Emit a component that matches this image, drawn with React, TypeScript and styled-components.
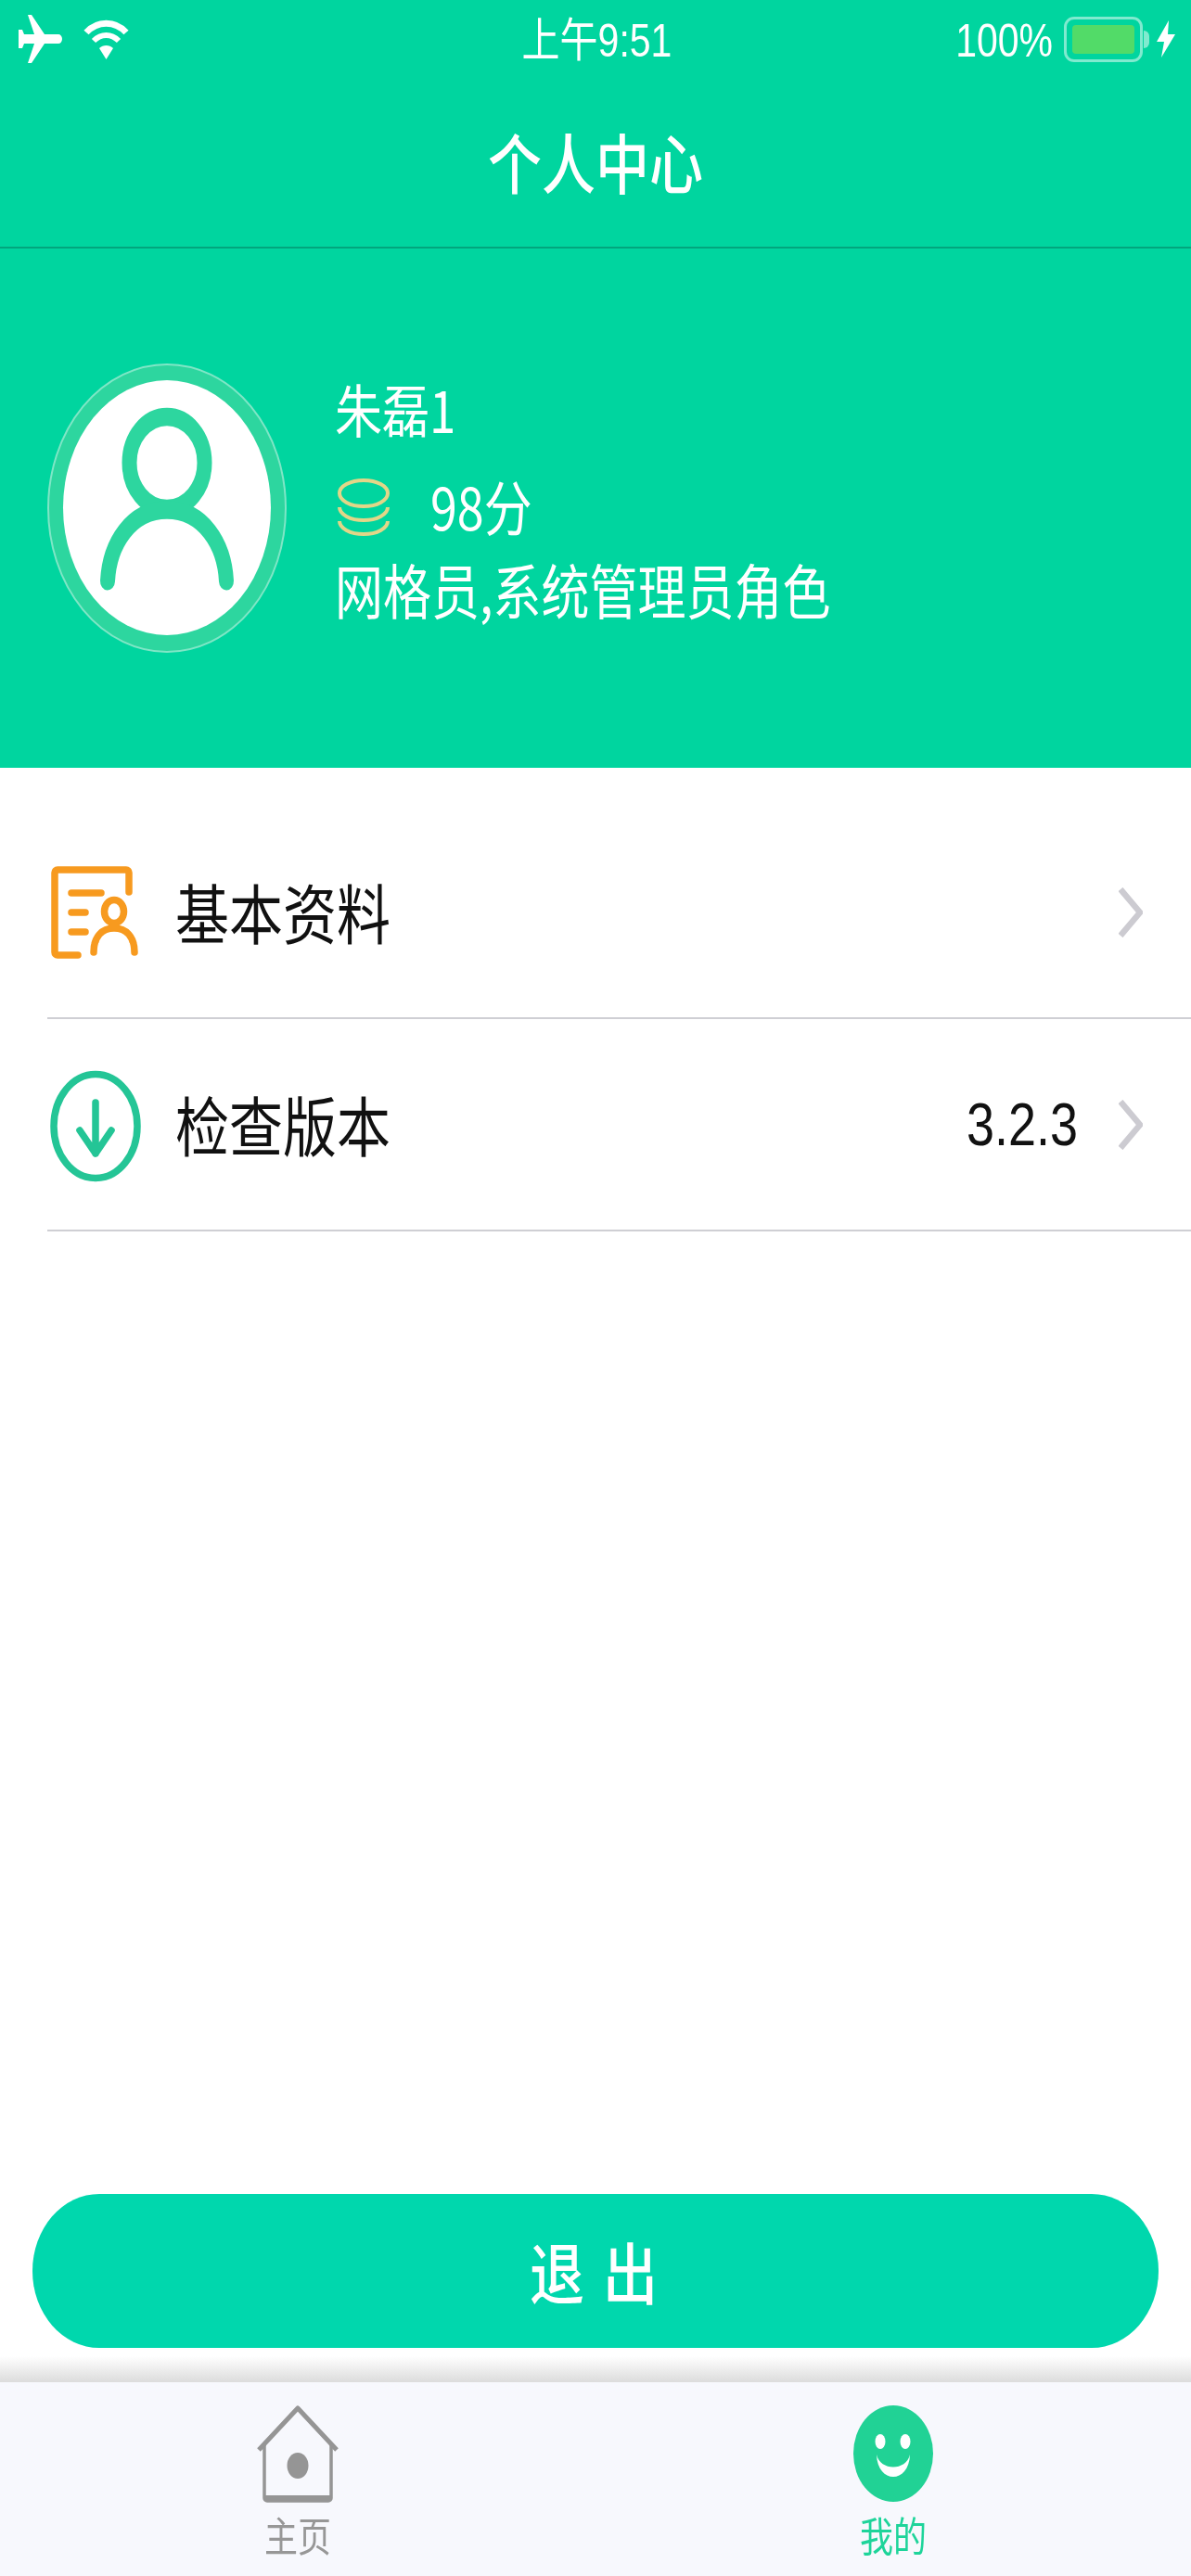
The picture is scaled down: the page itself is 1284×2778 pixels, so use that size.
import React from "react";
import styled, { createGlobalStyle } from "styled-components";

const Global = createGlobalStyle`
  html, body { margin: 0; padding: 0; background: #fff; }
  #root { width: 1284px; }
  * { box-sizing: border-box; }
`;

const CJK = `"Noto Sans CJK SC", "Liberation Sans", sans-serif`;
const LATIN = `"Liberation Sans", "Noto Sans CJK SC", sans-serif`;

const Page = styled.div`
  width: 1284px;
  height: 2778px;
  display: flex;
  flex-direction: column;
  background: #fff;
  overflow: hidden;
  font-family: ${CJK};
  filter: blur(0.6px);
`;

const Tall = styled.span<{ $size: number; $color?: string; $weight?: number; $spacing?: number; $latin?: boolean }>`
  display: inline-block;
  font-family: ${(p) => (p.$latin ? LATIN : CJK)};
  font-size: ${(p) => p.$size}px;
  font-weight: ${(p) => p.$weight ?? 400};
  line-height: 1.2;
  letter-spacing: ${(p) => p.$spacing ?? 0}px;
  color: ${(p) => p.$color ?? "#fff"};
  white-space: nowrap;
  transform: scaleY(1.216);
`;

const StatusText = styled(Tall)`
  margin-top: 6px;
`;

const Header = styled.header`
  background: #00d59f;
  flex: none;
`;

const StatusBar = styled.div`
  height: 84px;
  display: grid;
  grid-template-columns: 1fr auto 1fr;
  align-items: center;
  padding: 0 17px 0 20px;
`;

const StatusLeft = styled.div`
  display: flex;
  align-items: center;
  gap: 23px;
`;

const StatusRight = styled.div`
  display: flex;
  align-items: center;
  justify-content: flex-end;
  gap: 12px;
`;

const Battery = styled.div`
  width: 85px;
  height: 49px;
  padding: 6px;
  border: 3px solid rgba(255, 255, 255, 0.5);
  border-radius: 11px;
  position: relative;
  &::after {
    content: "";
    position: absolute;
    right: -10px;
    top: 12px;
    width: 6px;
    height: 19px;
    background: rgba(255, 255, 255, 0.5);
    border-radius: 0 6px 6px 0;
  }
`;

const BatteryFill = styled.div`
  width: 100%;
  height: 100%;
  background: #52db68;
  border-radius: 4px;
`;

const BoltIcon = styled.svg`
  width: 20px;
  height: 40px;
  margin-left: 3px;
  flex: none;
`;

const NavBar = styled.div`
  height: 184px;
  display: flex;
  align-items: center;
  justify-content: center;
  border-bottom: 2px solid #02a57d;
`;

const Profile = styled.section`
  height: 560px;
  display: flex;
  align-items: center;
  gap: 52px;
  padding-left: 51px;
`;

const AvatarSvg = styled.svg`
  width: 258px;
  height: 312px;
  flex: none;
`;

const ProfileInfo = styled.div`
  display: flex;
  flex-direction: column;
  padding-bottom: 20px;
`;

const InfoLine = styled.div<{ $gap?: number }>`
  height: 62px;
  display: flex;
  align-items: center;
  margin-bottom: ${(p) => p.$gap ?? 0}px;
`;

const ScoreLine = styled(InfoLine)`
  gap: 44px;
  padding-left: 3px;
`;

const CoinIcon = styled.svg`
  width: 56px;
  height: 62px;
  flex: none;
  margin-top: 4px;
`;

const List = styled.div`
  padding: 42px 0 0 51px;
  flex: none;
`;

const Row = styled.div`
  height: 229px;
  display: flex;
  align-items: center;
  padding-right: 52px;
  border-bottom: 2px solid #cfcfd4;
`;

const RowIcon = styled.svg`
  width: 102px;
  flex: none;
  margin-right: 36px;
`;

const RowTitle = styled.div`
  flex: 1;
`;

const RowValue = styled.div`
  margin-right: 44px;
`;

const Chevron = styled.svg`
  width: 26px;
  height: 54px;
  flex: none;
`;

const Spacer = styled.div`
  flex: 1;
`;

const LogoutButton = styled.button`
  flex: none;
  height: 166px;
  margin: 0 35px 37px;
  border: 0;
  border-radius: 72px / 83px;
  background: #00d7ad;
  display: flex;
  align-items: center;
  justify-content: center;
  padding: 0 0 0 16px;
`;

const TabBar = styled.nav`
  flex: none;
  height: 209px;
  background: #f7f8fd;
  display: grid;
  grid-template-columns: 1fr 1fr;
  position: relative;
  &::before {
    content: "";
    position: absolute;
    left: 0;
    right: 0;
    top: -28px;
    height: 28px;
    background: linear-gradient(to bottom, rgba(255, 255, 255, 0), #dcdcdc);
  }
`;

const Tab = styled.div`
  display: flex;
  flex-direction: column;
  align-items: center;
  padding-top: 25px;
`;

const TabIcon = styled.svg`
  width: 88px;
  height: 105px;
  flex: none;
`;

const TabLabel = styled.div`
  margin-top: 13px;
`;

const Plane = () => (
  <svg width="47" height="52" viewBox="0 0 47 52">
    <path fill="#fff" d="M10 0h4l14 21h15c2 0 4 2 4 5s-2 5-4 5H28L14 52h-4l7-21H6l-2 5H0V16h4l2 5h11z" />
  </svg>
);

const Wifi = () => (
  <svg width="49" height="43" viewBox="0 0 49 43">
    <path fill="none" stroke="#fff" strokeWidth="7" d="M3 14C15 1 34 1 46 14" />
    <path fill="none" stroke="#fff" strokeWidth="6" d="M11 23c8-8 19-8 27 0" />
    <path fill="#fff" d="M17 31c4-4 11-4 15 0l-7.500 12z" />
  </svg>
);

const Bolt = () => (
  <BoltIcon viewBox="0 0 20 40">
    <path fill="#fff" d="M13 0 0 23h8L5 40l15-25h-8z" />
  </BoltIcon>
);

const Avatar = () => (
  <AvatarSvg viewBox="0 0 258 312">
    <ellipse cx="129" cy="156" rx="128" ry="155" fill="#2dd69f" stroke="#7fe6c6" strokeWidth="2" />
    <ellipse cx="129" cy="155.500" rx="112" ry="137.500" fill="#fff" />
    <g transform="scale(1 1.216)" fill="none" stroke="#2dd69f" strokeWidth="16">
      <ellipse cx="129" cy="88" rx="40.500" ry="40.700" />
      <path d="M65 193C67 160 90 130 129 130C168 130 191 160 193 193" strokeLinecap="round" />
    </g>
  </AvatarSvg>
);

const Coins = () => (
  <CoinIcon viewBox="0 0 56 62">
    <g fill="none" stroke="#e2d688" strokeWidth="4">
      <path d="M2 31a26 14 0 0 0 52 0" />
      <path d="M2 46a26 14 0 0 0 52 0" />
      <ellipse cx="28" cy="16" rx="26" ry="14" />
    </g>
  </CoinIcon>
);

const ProfileDocIcon = () => (
  <RowIcon height={102} viewBox="0 -1 102 102">
    <g fill="none" stroke="#f79a1f" strokeWidth="7.500" strokeLinecap="round" strokeLinejoin="round">
      <path d="M33 96H11a3 3 0 0 1-3-3V7a3 3 0 0 1 3-3h74a3 3 0 0 1 3 3v21" />
      <path d="M26 29h32M26 50h15M26 71h15" />
      <ellipse cx="72" cy="49" rx="10.500" ry="12.500" />
      <path d="M50 93c0-17 9-26 22-26s22 9 22 26" />
    </g>
  </RowIcon>
);

const DownloadIcon = () => (
  <RowIcon height={124} viewBox="0 0 102 124">
    <ellipse cx="52" cy="63.500" rx="45" ry="56" fill="none" stroke="#24c596" strokeWidth="7.500" />
    <path d="M52 38v55M35 68l17 25 17-25" fill="none" stroke="#24c596" strokeWidth="7.500" strokeLinecap="round" strokeLinejoin="round" />
  </RowIcon>
);

const Arrow = () => (
  <Chevron viewBox="0 0 26 54">
    <path d="M2 2l21 25L2 52" fill="none" stroke="#cccbd1" strokeWidth="6.500" />
  </Chevron>
);

const House = () => (
  <TabIcon viewBox="0 0 88 105">
    <path d="M2 48 44 3l42 45" fill="none" stroke="#959595" strokeWidth="5" strokeLinejoin="round" />
    <path d="M8 40v60a3 3 0 0 0 3 3h66a3 3 0 0 0 3-3V40" fill="none" stroke="#959595" strokeWidth="3.500" />
    <path d="M9 99.500h70" stroke="#959595" strokeWidth="5" />
    <ellipse cx="44" cy="65" rx="11.500" ry="14" fill="#959595" />
  </TabIcon>
);

const Smile = () => (
  <TabIcon viewBox="0 0 88 105">
    <ellipse cx="44" cy="52" rx="43" ry="52" fill="#21d295" />
    <ellipse cx="30" cy="39" rx="5.500" ry="8" fill="#fff" />
    <ellipse cx="57" cy="39" rx="5.500" ry="8" fill="#fff" />
    <path d="M26 53C27 85 61 85 62 53C58 71 30 71 26 53z" fill="#fff" />
  </TabIcon>
);

export default function App() {
  return (
    <Page>
      <Global />
      <Header>
        <StatusBar>
          <StatusLeft>
            <Plane />
            <Wifi />
          </StatusLeft>
          <StatusText $size={41} $latin>上午9:51</StatusText>
          <StatusRight>
            <StatusText $size={41} $latin>100%</StatusText>
            <Battery>
              <BatteryFill />
            </Battery>
            <Bolt />
          </StatusRight>
        </StatusBar>
        <NavBar>
          <Tall $size={58} $weight={500}>个人中心</Tall>
        </NavBar>
        <Profile>
          <Avatar />
          <ProfileInfo>
            <InfoLine $gap={42}>
              <Tall $size={51}>朱磊1</Tall>
            </InfoLine>
            <ScoreLine $gap={28}>
              <Coins />
              <Tall $size={52}>98分</Tall>
            </ScoreLine>
            <InfoLine>
              <Tall $size={52}>网格员,系统管理员角色</Tall>
            </InfoLine>
          </ProfileInfo>
        </Profile>
      </Header>
      <List>
        <Row>
          <ProfileDocIcon />
          <RowTitle>
            <Tall $size={58} $color="#111">基本资料</Tall>
          </RowTitle>
          <Arrow />
        </Row>
        <Row>
          <DownloadIcon />
          <RowTitle>
            <Tall $size={58} $color="#111">检查版本</Tall>
          </RowTitle>
          <RowValue>
            <Tall $size={54} $color="#111" $latin>3.2.3</Tall>
          </RowValue>
          <Arrow />
        </Row>
      </List>
      <Spacer />
      <LogoutButton>
        <Tall $size={59} $weight={500} $spacing={20}>退出</Tall>
      </LogoutButton>
      <TabBar>
        <Tab>
          <House />
          <TabLabel>
            <Tall $size={36} $color="#979797">主页</Tall>
          </TabLabel>
        </Tab>
        <Tab>
          <Smile />
          <TabLabel>
            <Tall $size={36} $color="#1ed49a">我的</Tall>
          </TabLabel>
        </Tab>
      </TabBar>
    </Page>
  );
}
